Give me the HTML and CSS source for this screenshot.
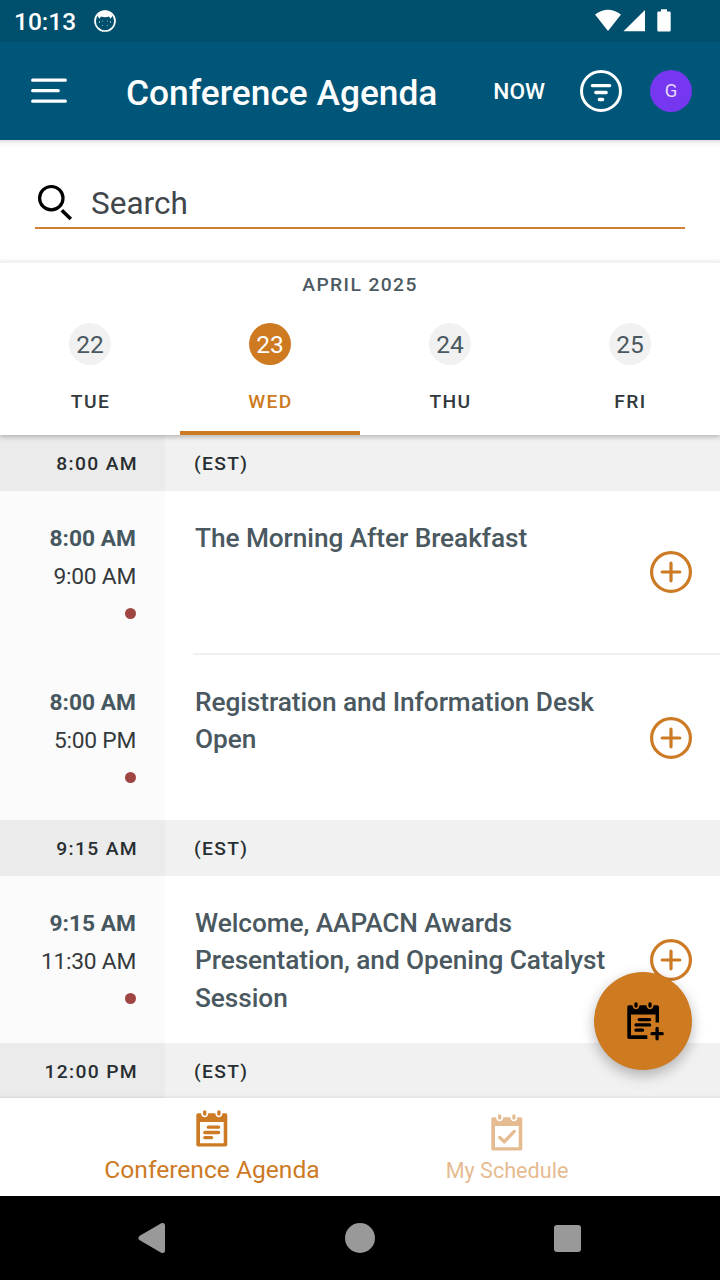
FILE: index.html
```html
<!DOCTYPE html>
<html lang="en">
<head>
    <meta charset="UTF-8">
    <meta name="viewport" content="width=device-width, initial-scale=1.0">
    <title>Conference Agenda</title>
    <link rel="stylesheet" href="styles.css">
</head>
<body>
    <div class="status-bar">
        <span class="clock">10:13</span>
        <svg class="status-app" width="24" height="24" viewBox="0 0 24 24">
            <circle cx="12" cy="12" r="10" fill="none" stroke="#fff" stroke-width="1.7"/>
            <path d="M4.5 7 Q7 1.5 12 1.5 Q17 1.5 19.5 7 L17.5 9.8 L16 7.5 Q12 9 8 7.5 L6.5 9.8 Z" fill="#fff"/>
            <path d="M6.5 12v2M17.5 12v2M9 12h1M14 12h1M9 16.5h1M14 16.5h1" stroke="#8fb0bd" stroke-width="1" fill="none"/>
        </svg>
        <svg class="status-icons" width="78" height="24" viewBox="0 0 78 24">
            <path d="M0 5.5 Q13 -4 26 5.5 L13 22 Z" fill="#fff"/>
            <path d="M28.5 22.3 L50 1 V22.3 Z" fill="#fff"/>
            <path d="M66 0.3h6v2.2h2.5q1.2 0 1.2 1.2v17.6q0 1.2-1.2 1.2h-11q-1.2 0-1.2-1.2v-17.6q0-1.2 1.2-1.2h2.5z" fill="#fff"/>
        </svg>
    </div>

    <header class="toolbar">
        <svg class="menu-icon" width="36" height="26" viewBox="0 0 36 26">
            <path d="M1.7 2.2H34.3M1.7 12.7H27.2M1.7 23.2H34.3" stroke="#fff" stroke-width="3.3" stroke-linecap="round"/>
        </svg>
        <h1>Conference Agenda</h1>
        <span class="now">NOW</span>
        <svg class="filter-icon" width="42" height="42" viewBox="0 0 42 42">
            <circle cx="21" cy="21" r="19.5" fill="none" stroke="#fff" stroke-width="3"/>
            <path d="M12.3 15.6H29.7M15.8 22.5H26.2M19.3 29.5H22.7" stroke="#fff" stroke-width="3.3" stroke-linecap="round"/>
        </svg>
        <div class="avatar">G</div>
    </header>

    <div class="search">
        <div class="search-field">
            <svg width="38" height="38" viewBox="0 0 38 38">
                <circle cx="16.3" cy="14.2" r="11.7" fill="none" stroke="#000" stroke-width="3.2"/>
                <path d="M26.8 26.2 L35.8 35" stroke="#000" stroke-width="3.6"/>
            </svg>
            <span>Search</span>
        </div>
    </div>

    <section class="calendar">
        <div class="month">APRIL 2025</div>
        <div class="days">
            <div class="day"><span class="num">22</span><span class="name">TUE</span></div>
            <div class="day active"><span class="num">23</span><span class="name">WED</span></div>
            <div class="day"><span class="num">24</span><span class="name">THU</span></div>
            <div class="day"><span class="num">25</span><span class="name">FRI</span></div>
        </div>
    </section>

    <main class="agenda">
        <div class="slot"><span class="slot-time">8:00 AM</span><span class="slot-zone">(EST)</span></div>
        <div class="session first">
            <div class="times"><b>8:00 AM</b><span>9:00 AM</span><i class="dot"></i></div>
            <div class="info">
                <h2>The Morning After Breakfast</h2>
                <svg class="add" width="42" height="42" viewBox="0 0 42 42">
                    <circle cx="21" cy="21" r="19.4"/><path d="M12.2 21H29.8M21 12.2V29.8"/>
                </svg>
            </div>
        </div>
        <div class="session">
            <div class="times"><b>8:00 AM</b><span>5:00 PM</span><i class="dot"></i></div>
            <div class="info">
                <h2>Registration and Information Desk Open</h2>
                <svg class="add" width="42" height="42" viewBox="0 0 42 42">
                    <circle cx="21" cy="21" r="19.4"/><path d="M12.2 21H29.8M21 12.2V29.8"/>
                </svg>
            </div>
        </div>
        <div class="slot"><span class="slot-time">9:15 AM</span><span class="slot-zone">(EST)</span></div>
        <div class="session tall">
            <div class="times"><b>9:15 AM</b><span>11:30 AM</span><i class="dot"></i></div>
            <div class="info">
                <h2>Welcome, AAPACN Awards Presentation, and Opening Catalyst Session</h2>
                <svg class="add" width="42" height="42" viewBox="0 0 42 42">
                    <circle cx="21" cy="21" r="19.4"/><path d="M12.2 21H29.8M21 12.2V29.8"/>
                </svg>
            </div>
        </div>
        <div class="slot last"><span class="slot-time">12:00 PM</span><span class="slot-zone">(EST)</span></div>

        <button class="fab" aria-label="Add to schedule">
            <svg width="38" height="39" viewBox="0 0 38 39">
                <path d="M2 3.3H5.4Q6 7.3 9 7.3T12.6 3.3H19.4Q20 7.3 23 7.3T26.6 3.3H30Q32 3.3 32 5V20.5H28.6V12.5H4V33.3H20.3V37H2Q0.3 37 0.3 35.3V5Q0.3 3.3 2 3.3Z"/>
                <path class="line" d="M9 1.8V4M23 1.8V4M12.2 17.6H22.6M9 22.9H22.6M9 28.2H15.6"/>
                <path class="plus" d="M25 31.7H35.2M30.1 26.4V36.8"/>
            </svg>
        </button>
    </main>

    <nav class="tabs">
        <div class="tab selected">
            <svg width="32" height="37" viewBox="0 0 32 37">
                <path d="M2 3.3H5Q5.5 7.2 8.7 7.2T12.3 3.3H19.2Q19.8 7.2 22.9 7.2T26.5 3.3H29.5Q31.3 3.3 31.3 5V34.8Q31.3 36.6 29.5 36.6H2Q0.3 36.6 0.3 34.8V5Q0.3 3.3 2 3.3ZM4 12V33.2H27.7V12Z" fill-rule="evenodd"/>
                <path class="line" d="M8.7 1.8V4M22.9 1.8V4M12.3 17.2H22.6M8.8 22.5H22.6M8.8 27.7H15.6"/>
            </svg>
            <span>Conference Agenda</span>
        </div>
        <div class="tab muted">
            <svg width="32" height="37" viewBox="0 0 32 37">
                <path d="M2 3.3H5Q5.5 7.2 8.7 7.2T12.3 3.3H19.2Q19.8 7.2 22.9 7.2T26.5 3.3H29.5Q31.3 3.3 31.3 5V34.8Q31.3 36.6 29.5 36.6H2Q0.3 36.6 0.3 34.8V5Q0.3 3.3 2 3.3ZM4 12V33.2H27.7V12Z" fill-rule="evenodd"/>
                <path class="line" d="M8.7 1.8V4M22.9 1.8V4M8.8 23.5L13.3 27.7L23.3 17.4"/>
            </svg>
            <span>My Schedule</span>
        </div>
    </nav>

    <div class="system-nav">
        <svg width="28" height="30" viewBox="0 0 28 30"><path d="M3 15L24.5 2.5V27.5Z" stroke-width="5" stroke-linejoin="round"/></svg>
        <div class="home"></div>
        <div class="recent"></div>
    </div>
</body>
</html>
```
FILE: styles.css
```css
* {
    box-sizing: border-box;
}

body {
    font-family: Roboto, sans-serif;
    background-color: #fff;
    margin: 0;
    width: 720px;
    height: 1280px;
    display: flex;
    flex-direction: column;
    overflow: hidden;
}

.status-bar {
    height: 42px;
    flex: none;
    display: flex;
    align-items: center;
    padding: 0 47px 0 14px;
    background-color: #004f6d;
    color: #fff;
}

.clock {
    font-size: 24.5px;
    font-weight: 500;
    width: 79px;
}

.status-icons {
    margin-left: auto;
}

.toolbar {
    height: 98px;
    flex: none;
    display: flex;
    align-items: center;
    padding: 0 28px 0 31px;
    background-color: #005678;
    color: #fff;
}

.toolbar h1 {
    font-size: 35.3px;
    font-weight: 500;
    margin: 4px 0 0 59px;
    white-space: nowrap;
}

.now {
    font-size: 22.7px;
    font-weight: 500;
    margin-left: auto;
}

.filter-icon {
    margin: 0 28px 0 35px;
}

.avatar {
    width: 42px;
    height: 42px;
    border-radius: 50%;
    background-color: #7537ef;
    color: #e6d9fd;
    font-size: 18.5px;
    line-height: 43px;
    text-align: center;
}

.search {
    height: 121px;
    flex: none;
    padding: 40px 35px 0;
    background: linear-gradient(#dcdcdc, #f6f6f6 3px, #fff 9px);
}

.search-field {
    height: 49px;
    display: flex;
    align-items: center;
    gap: 18px;
    border-bottom: 2px solid #cd8136;
    color: #40464a;
    font-size: 31.5px;
}

.search-field svg {
    margin-bottom: 2px;
}

.calendar {
    height: 174px;
    flex: none;
    position: relative;
    border-top: 2px solid #f2f2f2;
    background-color: #fff;
    box-shadow: 0 2px 5px rgba(0, 0, 0, 0.25);
    z-index: 1;
    display: flex;
    flex-direction: column;
}

.month {
    height: 43px;
    line-height: 44px;
    text-align: center;
    font-size: 19.25px;
    font-weight: 500;
    letter-spacing: 1.4px;
    color: #4c5a62;
}

.days {
    flex: 1;
    display: grid;
    grid-template-columns: repeat(4, 1fr);
}

.day {
    display: flex;
    flex-direction: column;
    align-items: center;
    padding-top: 17px;
}

.num {
    width: 42px;
    height: 42px;
    border-radius: 50%;
    background-color: #f1f1f1;
    color: #4a5860;
    font-size: 24.5px;
    line-height: 43px;
    text-align: center;
}

.name {
    margin-top: 25px;
    padding-left: 1px;
    font-size: 19.25px;
    font-weight: 500;
    line-height: 23px;
    letter-spacing: 1.4px;
    color: #30383d;
}

.day.active {
    border-bottom: 4px solid #cd7a25;
}

.active .num {
    background-color: #cd7a21;
    color: #fff;
}

.active .name {
    color: #cd7a21;
}

.agenda {
    flex: 1;
    min-height: 0;
    position: relative;
}

.agenda::after {
    content: "";
    position: absolute;
    left: 0;
    right: 0;
    bottom: 0;
    height: 3px;
    background: linear-gradient(transparent, rgba(0, 0, 0, 0.07));
}

.slot {
    height: 56px;
    display: flex;
    line-height: 57px;
    font-size: 19.25px;
    font-weight: 500;
    letter-spacing: 1.35px;
    color: #282e31;
    background-color: #f1f1f1;
}

.slot-time {
    width: 165px;
    padding-right: 27px;
    text-align: right;
    background-color: #ebebeb;
}

.slot-zone {
    padding-left: 29px;
}

.slot.last {
    height: 55px;
}

.session {
    height: 165px;
    display: flex;
}

.session.first {
    height: 164px;
}

.session.tall {
    height: 167px;
}

.times {
    width: 165px;
    padding: 29px 29px 0 0;
    display: flex;
    flex-direction: column;
    align-items: flex-end;
    background-color: #fbfbfb;
    color: #35393b;
    font-size: 22.75px;
    line-height: 38px;
}

.times b {
    font-weight: 700;
    color: #465760;
}

.times span {
    letter-spacing: -0.25px;
}

.dot {
    width: 11px;
    height: 11px;
    margin-top: 12px;
    border-radius: 50%;
    background-color: #9f4643;
}

.info {
    flex: 1;
    display: flex;
    justify-content: space-between;
    align-items: center;
    margin-left: 28px;
    padding: 0 28px 0 2px;
}

.first .info {
    border-bottom: 2px solid #f0f0f0;
}

.info h2 {
    align-self: flex-start;
    width: 420px;
    margin: 29px 0 0;
    font-size: 26.25px;
    font-weight: 500;
    line-height: 37.3px;
    letter-spacing: -0.07px;
    color: #4a5860;
}

.add {
    fill: none;
    stroke: #cd7a25;
    stroke-width: 3.2;
    stroke-linecap: round;
}

.fab {
    position: absolute;
    right: 28px;
    bottom: 28px;
    z-index: 2;
    width: 98px;
    height: 98px;
    padding: 0;
    display: flex;
    justify-content: center;
    align-items: center;
    border: none;
    border-radius: 50%;
    background-color: #cd7a21;
    box-shadow: 0 5px 14px rgba(0, 0, 0, 0.28);
}

.fab svg {
    margin-left: 6px;
}

.fab .line,
.fab .plus {
    fill: none;
    stroke: #000;
    stroke-width: 3.3;
    stroke-linecap: round;
}

.tabs {
    height: 98px;
    flex: none;
    display: flex;
    justify-content: center;
    background-color: #fff;
}

.tab {
    width: 294px;
    display: flex;
    flex-direction: column;
    align-items: center;
    padding: 12px 2px 0 0;
    font-size: 24.6px;
    color: #cd7a25;
    fill: #cd7a25;
    stroke: none;
}

.tab span {
    margin-top: 8px;
    line-height: 30px;
}

.tab .line {
    fill: none;
    stroke: #cd7a25;
    stroke-width: 3.3;
    stroke-linecap: round;
}

.tab.muted {
    padding: 16px 0 0;
    font-size: 21.6px;
    opacity: 0.5;
}

.tab.muted span {
    margin-top: 5px;
}

.system-nav {
    height: 84px;
    flex: none;
    display: flex;
    justify-content: space-between;
    align-items: center;
    padding: 0 139px 0 138px;
    background-color: #000;
}

.system-nav svg {
    fill: #999;
    stroke: #999;
}

.home {
    width: 30px;
    height: 30px;
    border-radius: 50%;
    background-color: #999;
}

.recent {
    width: 27px;
    height: 27px;
    border-radius: 3px;
    background-color: #999;
}
```
